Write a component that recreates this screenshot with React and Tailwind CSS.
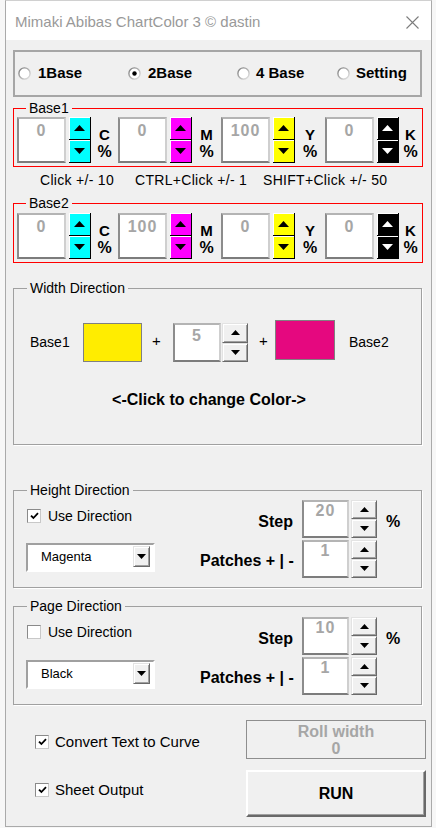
import React from 'react'

function Tri({ up, w = 9, h = 5, color = '#000' }) {
  const pts = up ? `0,${h} ${w / 2},0 ${w},${h}` : `0,0 ${w},0 ${w / 2},${h}`
  return (
    <svg width={w} height={h} viewBox={`0 0 ${w} ${h}`} className="block shrink-0">
      <polygon points={pts} fill={color} />
    </svg>
  )
}

function Radio({ checked }) {
  return (
    <svg width="13" height="13" viewBox="0 0 13 13" className="block shrink-0">
      <defs>
        <linearGradient id="radioEdge" x1="0" y1="0" x2="1" y2="1">
          <stop offset="0" stopColor="#7a7a7a" />
          <stop offset="1" stopColor="#e6e6e6" />
        </linearGradient>
      </defs>
      <circle cx="6.5" cy="6.5" r="5.6" fill="#fff" stroke="url(#radioEdge)" strokeWidth="1.4" />
      {checked ? <circle cx="6.5" cy="6.5" r="2.2" fill="#000" /> : null}
    </svg>
  )
}

function Check({ checked }) {
  return (
    <span className="inline-flex h-[14px] w-[14px] shrink-0 items-center justify-center border border-[#8a8a8a] border-b-[#c8c8c8] border-r-[#c8c8c8] bg-white">
      {checked ? (
        <svg width="9" height="8" viewBox="0 0 9 8">
          <path d="M1 3.6 L3.4 6 L8 1.2" stroke="#000" strokeWidth="1.8" fill="none" />
        </svg>
      ) : null}
    </span>
  )
}

function ValueBox({ value, className }) {
  return (
    <div
      className={`shrink-0 border-2 border-t-[#b4b4b4] border-r-[#cfcfcf] border-l-[#8c8c8c] border-b-[#7c7c7c] bg-white text-center text-[16px] font-bold tracking-[1px] text-[#a6a6a6] ${className}`}
    >
      {value}
    </div>
  )
}

function ColorSpin({ bg, arrow }) {
  const half = `flex flex-1 items-center justify-center border-b border-r border-black shadow-[inset_1px_1px_0_#fff] ${bg}`
  return (
    <div className="ml-[3px] flex h-[46px] w-[22px] shrink-0 flex-col">
      <div className={half}>
        <Tri up w={11} h={6} color={arrow} />
      </div>
      <div className={half}>
        <Tri w={11} h={6} color={arrow} />
      </div>
    </div>
  )
}

function GraySpin({ className }) {
  const half =
    'flex flex-1 items-center justify-center border border-t-[#e3e3e3] border-l-[#e3e3e3] border-b-[#696969] border-r-[#696969] bg-[#f0f0f0] shadow-[inset_1px_1px_0_#fff,inset_-1px_-1px_0_#a0a0a0]'
  return (
    <div className={`flex shrink-0 flex-col ${className}`}>
      <div className={half}>
        <Tri up w={9} h={5} />
      </div>
      <div className={half}>
        <Tri w={9} h={5} />
      </div>
    </div>
  )
}

function Cmyk({ value, label, bg, arrow, labelW }) {
  return (
    <div className="flex">
      <ValueBox value={value} className="h-[46px] w-[49px] pt-[3px] leading-[18px]" />
      <ColorSpin bg={bg} arrow={arrow} />
      <div className={`flex flex-col items-center pt-[9px] text-[15px] font-bold leading-[17px] ${labelW}`}>
        <span>{label}</span>
        <span className="text-[16px]">%</span>
      </div>
    </div>
  )
}

function BaseFrame({ title, values, className }) {
  return (
    <fieldset className={`ml-[7px] w-[409px] border border-[#ff0000] pb-[3px] pl-[3px] ${className}`}>
      <legend className="ml-[9px] px-[3px] text-[14px] leading-[16px]">{title}</legend>
      <div className="flex">
        <Cmyk value={values[0]} label="C" bg="bg-[#00ffff]" arrow="#000" labelW="w-[27px]" />
        <Cmyk value={values[1]} label="M" bg="bg-[#ff00ff]" arrow="#000" labelW="w-[29px]" />
        <Cmyk value={values[2]} label="Y" bg="bg-[#ffff00]" arrow="#000" labelW="w-[30px]" />
        <Cmyk value={values[3]} label="K" bg="bg-black" arrow="#fff" labelW="w-[23px]" />
      </div>
    </fieldset>
  )
}

function Dropdown({ value, className }) {
  return (
    <div
      className={`flex h-[29px] w-[129px] border-2 border-t-[#a0a0a0] border-l-[#a0a0a0] border-b-white border-r-white bg-white ${className}`}
    >
      <span className="flex-1 pl-[13px] text-[13px] leading-[24px]">{value}</span>
      <span className="mr-[3px] mt-[1px] flex h-[21px] w-[17px] items-center justify-center border border-t-[#e3e3e3] border-l-[#e3e3e3] border-b-[#696969] border-r-[#696969] bg-[#f0f0f0] shadow-[inset_1px_1px_0_#fff,inset_-1px_-1px_0_#a0a0a0]">
        <Tri w={9} h={5} />
      </span>
    </div>
  )
}

function DirFrame({ title, checked, value, step, className, bodyH, checkMt, dropMt, stepPt }) {
  return (
    <fieldset className={`ml-[7px] w-[409px] border border-[#a0a0a0] shadow-[1px_1px_0_#fff] ${className}`}>
      <legend className="ml-[13px] px-[3px] text-[14px] leading-[16px]">{title}</legend>
      <div className={`flex ${bodyH}`}>
        <div className="w-[186px] pl-[12px]">
          <div className={`ml-[1px] flex h-[18px] items-center gap-[7px] ${checkMt}`}>
            <Check checked={checked} />
            <span className="text-[14px]">Use Direction</span>
          </div>
          <Dropdown value={value} className={dropMt} />
        </div>
        <div className={stepPt}>
          <div className="flex h-[38px]">
            <span className="w-[93px] pt-[13px] text-right text-[16px] font-bold leading-[18px]">Step</span>
            <ValueBox value={step} className="ml-[9px] h-[38px] w-[47px] leading-[17px]" />
            <GraySpin className="ml-[2px] h-[38px] w-[26px]" />
            <span className="ml-[9px] pt-[13px] text-[16px] font-bold leading-[18px]">%</span>
          </div>
          <div className="mt-[2px] flex h-[38px]">
            <span className="w-[93px] whitespace-nowrap pt-[12px] text-right text-[16px] font-bold leading-[18px]">
              Patches + | -
            </span>
            <ValueBox value="1" className="ml-[9px] h-[38px] w-[47px] leading-[17px]" />
            <GraySpin className="ml-[2px] h-[38px] w-[26px]" />
          </div>
        </div>
      </div>
    </fieldset>
  )
}

export default function App() {
  return (
    <div className="h-[828px] w-[436px] overflow-hidden bg-[#f7f7f7] font-['Liberation_Sans',Arial,sans-serif] text-black">
      <div className="ml-[5px] flex h-[827px] w-[427px] flex-col border border-[#aaaaaa] border-t-[#d0d0d0] bg-[#f0f0f0]">
        {/* title bar */}
        <div className="flex h-[39px] shrink-0 items-center bg-white pl-[9px] pr-[12px] pt-[3px]">
          <span className="flex-1 text-[15px] text-[#999999]">Mimaki Abibas ChartColor 3 © dastin</span>
          <svg width="13" height="13" viewBox="0 0 13 13">
            <path d="M0.5 0.5 L12.5 12.5 M12.5 0.5 L0.5 12.5" stroke="#7c7c7c" strokeWidth="1.1" />
          </svg>
        </div>

        {/* base selector */}
        <div className="ml-[7px] mt-[10px] flex h-[47px] w-[409px] shrink-0 items-center border-2 border-[#a6a6a6] pl-[3px] text-[15px] font-bold">
          <div className="flex w-[110px] items-center gap-[7px]">
            <Radio />
            <span>1Base</span>
          </div>
          <div className="flex w-[109px] items-center gap-[7px]">
            <Radio checked />
            <span>2Base</span>
          </div>
          <div className="flex w-[100px] items-center gap-[6px]">
            <Radio />
            <span>4 Base</span>
          </div>
          <div className="flex items-center gap-[6px]">
            <Radio />
            <span>Setting</span>
          </div>
        </div>

        <BaseFrame title="Base1" values={['0', '0', '100', '0']} className="mt-[3px] pt-[1px]" />

        <div className="flex h-[28px] shrink-0 pl-[34px] pt-[4px] text-[14px] leading-[18px] tracking-[0.3px]">
          <span className="w-[95px]">Click +/- 10</span>
          <span className="w-[128px]">CTRL+Click +/- 1</span>
          <span>SHIFT+Click +/- 50</span>
        </div>

        <BaseFrame title="Base2" values={['0', '100', '0', '0']} className="pt-[2px]" />

        {/* width direction */}
        <fieldset className="ml-[7px] mt-[17px] w-[409px] border border-[#a0a0a0] shadow-[1px_1px_0_#fff]">
          <legend className="ml-[13px] px-[3px] text-[14px] leading-[16px]">Width Direction</legend>
          <div className="h-[148px] pt-[24px]">
            <div className="flex h-[42px] items-start pl-[16px] text-[14px] leading-[18px]">
              <span className="mt-[13px] w-[53px]">Base1</span>
              <div className="mt-[3px] h-[39px] w-[59px] border border-[#808080] bg-[#ffed00]" />
              <span className="ml-[10px] mt-[12px] w-[21px] text-[15px]">+</span>
              <ValueBox value="5" className="mt-[3px] h-[39px] w-[48px] pt-[2px] leading-[18px]" />
              <GraySpin className="ml-[1px] mt-[3px] h-[39px] w-[26px]" />
              <span className="ml-[11px] mt-[12px] w-[16px] text-[15px]">+</span>
              <div className="h-[40px] w-[60px] border border-[#808080] bg-[#e5087f]" />
              <span className="ml-[14px] mt-[13px]">Base2</span>
            </div>
            <div className="mt-[28px] pr-[17px] text-center text-[16px] font-bold leading-[20px]">
              &lt;-Click to change Color-&gt;
            </div>
          </div>
        </fieldset>

        <DirFrame
          title="Height Direction"
          checked
          value="Magenta"
          step="20"
          className="mt-[37px]"
          bodyH="h-[89px]"
          checkMt="mt-[9px]"
          dropMt="mt-[18px]"
          stepPt="pt-[2px]"
        />

        <DirFrame
          title="Page Direction"
          checked={false}
          value="Black"
          step="10"
          className="mt-[10px]"
          bodyH="h-[90px]"
          checkMt="mt-[9px]"
          dropMt="mt-[19px]"
          stepPt="pt-[3px]"
        />

        {/* bottom options */}
        <div className="mt-[15px] flex">
          <div className="w-[240px] pl-[29px] text-[15px]">
            <div className="mt-[13px] flex h-[18px] items-center gap-[6px]">
              <Check checked />
              <span>Convert Text to Curve</span>
            </div>
            <div className="mt-[30px] flex h-[18px] items-center gap-[6px]">
              <Check checked />
              <span>Sheet Output</span>
            </div>
          </div>
          <div className="flex w-[180px] flex-col">
            <div className="flex h-[39px] flex-col items-center justify-center border border-[#8e8e8e] text-[16px] font-bold leading-[17px] text-[#a6a6a6]">
              <span>Roll width</span>
              <span>0</span>
            </div>
            <div className="mt-[11px] flex h-[47px] items-center justify-center border-2 border-t-white border-l-white border-b-[#696969] border-r-[#696969] text-[16px] font-bold shadow-[inset_-1px_-1px_0_#a0a0a0]">
              RUN
            </div>
          </div>
        </div>
      </div>
    </div>
  )
}
